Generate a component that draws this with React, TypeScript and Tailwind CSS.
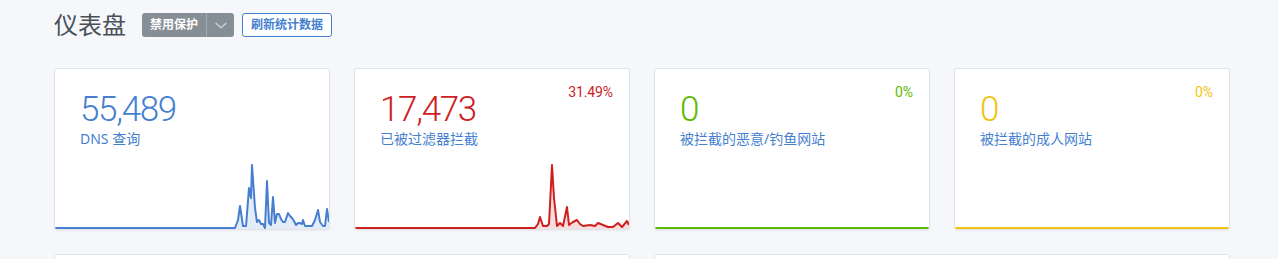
import React from 'react'

const cjk = { fontFamily: '"Noto Sans", "Noto Sans CJK SC", sans-serif' }
const num = { fontFamily: 'Roboto, "Noto Sans", sans-serif' }

type Pt = [number, number]

// x is pixel offset inside the card, h is height above the baseline
const blueData: Pt[] = [
  [0, 0], [180, 0], [183, 8], [185, 22], [188, 2], [191, 2], [194, 40], [196, 30], [197, 63],
  [200, 20], [202, 6], [204, 8], [206, 4], [208, 4], [210, 0], [212, 47], [214, 5],
  [216, 3], [218, 31], [220, 5], [222, 14], [224, 14], [226, 9], [228, 6], [230, 6],
  [233, 15], [235, 12], [237, 10], [239, 7], [241, 3], [243, 5], [245, 5], [247, 4],
  [248, 8], [250, 2], [253, 2], [257, 2], [260, 8], [263, 18], [265, 6], [268, 2],
  [270, 2], [272, 19], [274, 6],
]

const redData: Pt[] = [
  [0, 0], [180, 0], [183, 4], [185, 11], [188, 2], [192, 2], [194, 4], [197, 63],
  [199, 30], [202, 2], [205, 5], [208, 2], [212, 21], [214, 3], [218, 6], [222, 8],
  [225, 4], [228, 2], [235, 3], [240, 2], [243, 5], [248, 3], [253, 1], [258, 1],
  [263, 5], [267, 1], [272, 7], [274, 3],
]

function Spark({ data, color }: { data: Pt[]; color: string }) {
  const H = 66
  const line = data.map(([x, h]) => `${x},${H - 1 - h}`).join(' ')
  const area = `0,${H} ${line} 274,${H}`
  return (
    <svg className="block w-full h-[66px]" viewBox="0 0 274 66" preserveAspectRatio="none">
      <polygon points={area} fill={color} fillOpacity={0.15} />
      <polyline points={line} fill="none" stroke={color} strokeWidth={2} strokeLinejoin="round" />
    </svg>
  )
}

interface StatProps {
  value: string
  label: string
  percent?: string
  color: string
  data?: Pt[]
  textClass: string
  lineClass: string
}

function StatCard({ value, label, percent, color, data, textClass, lineClass }: StatProps) {
  return (
    <div className="relative flex flex-col w-[276px] h-[162px] bg-white border border-[#e0e5ec] rounded-[3px] shadow-[0_1px_2px_rgba(0,0,0,0.05)] overflow-hidden">
      {percent && (
        <div className={`absolute top-[13px] right-[16px] text-[14px] tracking-[-0.1px] ${textClass}`} style={num}>
          {percent}
        </div>
      )}
      <div className="px-[25px] pt-[20px]">
        <div className={`text-[35px] leading-[42px] font-light tracking-[-1.3px] ${textClass}`} style={num}>
          {value}
        </div>
        <div className="text-[14px] leading-[20px] text-[#467fcf] mt-[-2px]" style={cjk}>
          {label}
        </div>
      </div>
      <div className="mt-auto">
        {data ? <Spark data={data} color={color} /> : <div className={`h-[2px] ${lineClass}`} />}
      </div>
    </div>
  )
}

export default function App() {
  return (
    <div className="min-h-[259px] bg-[#f5f7fb] overflow-hidden" style={cjk}>
      <div className="pl-[54px] w-[1230px]">
        {/* Header */}
        <div className="flex items-center h-[49px] pt-[1px]">
          <h1 className="text-[24px] leading-none text-[#495057] mr-[16px]">仪表盘</h1>
          <div className="flex h-[24px] rounded-[3px] overflow-hidden bg-[#868e96] text-white mr-[8px]">
            <button className="px-[8px] text-[12px] font-bold leading-none">禁用保护</button>
            <div className="w-px bg-[#a4aab0]" />
            <button className="w-[27px] flex items-center justify-center">
              <svg width="16" height="16" viewBox="0 0 24 24" fill="none" stroke="#d4d8dc" strokeWidth="1.8">
                <path d="M4 9l8 7 8-7" />
              </svg>
            </button>
          </div>
          <button className="h-[24px] px-[8px] rounded-[3px] border border-[#467fcf] text-[#467fcf] text-[12px] font-bold leading-none bg-white">
            刷新统计数据
          </button>
        </div>

        {/* Stat cards */}
        <div className="flex gap-[24px] mt-[19px]">
          <StatCard value="55,489" label="DNS 查询" color="#467fcf" data={blueData} textClass="text-[#467fcf]" lineClass="bg-[#467fcf]" />
          <StatCard value="17,473" label="已被过滤器拦截" percent="31.49%" color="#cd201f" data={redData} textClass="text-[#cd201f]" lineClass="bg-[#cd201f]" />
          <StatCard value="0" label="被拦截的恶意/钓鱼网站" percent="0%" color="#5eba00" textClass="text-[#5eba00]" lineClass="bg-[#5eba00]" />
          <StatCard value="0" label="被拦截的成人网站" percent="0%" color="#f1c40f" textClass="text-[#f1c40f]" lineClass="bg-[#f1c40f]" />
        </div>

        {/* Lower cards */}
        <div className="flex gap-[24px] mt-[24px]">
          <div className="w-[576px] h-[40px] bg-white border border-[#e0e5ec] rounded-[3px]" />
          <div className="w-[576px] h-[40px] bg-white border border-[#e0e5ec] rounded-[3px]" />
        </div>
      </div>
    </div>
  )
}
